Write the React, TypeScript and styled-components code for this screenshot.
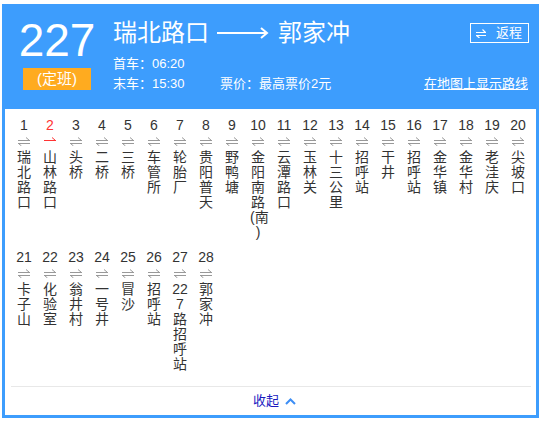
import React from "react";
import styled, { createGlobalStyle } from "styled-components";

const Global = createGlobalStyle`
  html, body { margin: 0; padding: 0; background: #fff; }
  body { font-family: "Liberation Sans", "Noto Sans CJK SC", sans-serif; }
`;

const BLUE = "#3d9dfd";

const Panel = styled.div`
  box-sizing: border-box;
  width: 537px;
  margin: 4px 0 0 2px;
  border: 3px solid ${BLUE};
  background: #fff;
`;

const Header = styled.div`
  display: flex;
  height: 102px;
  box-sizing: border-box;
  padding: 10px 7px 0 16px;
  background: ${BLUE};
  color: #fff;
`;

const LineBadge = styled.div`
  display: flex;
  flex-direction: column;
  align-items: center;
  width: 72px;
`;

const LineNo = styled.div`
  font-family: "Liberation Sans", sans-serif;
  font-size: 46px;
  line-height: 46px;
  height: 46px;
`;

const Tag = styled.div`
  margin-top: 5px;
  width: 68px;
  height: 22px;
  background: #ffab1f;
  font-size: 15px;
  line-height: 22px;
  text-align: center;
`;

const Info = styled.div`
  flex: 1;
  margin-left: 20px;
  padding-top: 1px;
`;

const TitleRow = styled.div`
  display: flex;
  align-items: center;
  height: 30px;
`;

const Terminal = styled.span`
  font-size: 24px;
  line-height: 30px;
`;

const LongArrow = styled.svg`
  display: block;
  margin: 0 9px 0 8px;
`;

const ReturnButton = styled.div`
  margin-left: auto;
  display: flex;
  align-items: center;
  gap: 10px;
  height: 20px;
  box-sizing: border-box;
  padding: 0 6px 0 5px;
  border: 1px solid #fff;
  font-size: 13px;
  line-height: 18px;
`;

const Times = styled.div`
  margin-top: 6px;
  font-size: 13px;
  line-height: 20px;
`;

const InfoLine = styled.div`
  display: flex;
  height: 20px;
  align-items: center;
`;

const TimeText = styled.span`
  width: 107px;
`;

const MapLink = styled.a`
  margin-left: auto;
  margin-right: 1px;
  color: #fff;
  text-decoration: underline;
  cursor: pointer;
`;

const Stops = styled.div`
  display: grid;
  grid-template-columns: repeat(20, 26px);
  row-gap: 8px;
  align-items: start;
  padding: 7px 5px 0 6px;
`;

const Stop = styled.div`
  display: flex;
  flex-direction: column;
  align-items: center;
`;

const StopNo = styled.div<{ $active?: boolean }>`
  font-family: "Liberation Sans", sans-serif;
  font-size: 14px;
  line-height: 18px;
  height: 18px;
  color: ${(p) => (p.$active ? "#ff3333" : "#333")};
`;

const DirIcon = styled.svg`
  display: block;
  margin: 3px 0 4px;
`;

const StopName = styled.div`
  width: 16px;
  font-size: 14px;
  line-height: 15px;
  color: #333;
  text-align: center;
  word-break: break-all;
`;

const Divider = styled.div`
  margin: 14px 5px 0 6px;
  border-top: 1px solid #e8e8e8;
`;

const Footer = styled.div`
  display: flex;
  align-items: center;
  justify-content: center;
  gap: 6px;
  height: 28px;
`;

const Collapse = styled.a`
  font-size: 13px;
  line-height: 16px;
  color: #1a1ac0;
  cursor: pointer;
  margin-left: 8px;
`;

const stops = [
  "瑞北路口", "山林路口", "头桥", "二桥", "三桥", "车管所", "轮胎厂", "贵阳普天",
  "野鸭塘", "金阳南路(南\u200B)", "云潭路口", "玉林关", "十三公里", "招呼站", "干井",
  "招呼站", "金华镇", "金华村", "老洼庆", "尖坡口", "卡子山", "化验室", "翁井村",
  "一号井", "冒沙", "招呼站", "227路招呼站", "郭家冲",
];

const Harpoons: React.FC<{ color: string; single?: boolean }> = ({ color, single }) => (
  <DirIcon width="12" height="9" viewBox="0 0 12 9">
    <path d="M0 3.5H12M11.5 3.5L8 0.5" stroke={color} strokeWidth="1" fill="none" />
    {!single && <path d="M0 6.5H12M0.5 6.5L3.5 9" stroke={color} strokeWidth="1" fill="none" />}
  </DirIcon>
);

export default function App() {
  return (
    <>
      <Global />
      <Panel>
        <Header>
          <LineBadge>
            <LineNo>227</LineNo>
            <Tag>(定班)</Tag>
          </LineBadge>
          <Info>
            <TitleRow>
              <Terminal>瑞北路口</Terminal>
              <LongArrow width="52" height="12" viewBox="0 0 52 12">
                <path d="M0 6H50" stroke="#fff" strokeWidth="2" />
                <path d="M44 1L50 6L44 11" stroke="#fff" strokeWidth="2" fill="none" />
              </LongArrow>
              <Terminal>郭家冲</Terminal>
              <ReturnButton>
                <svg width="10" height="9" viewBox="0 0 10 9">
                  <path d="M0 3.5H10M9.5 3.5L6.5 0.5" stroke="#fff" strokeWidth="1.2" fill="none" />
                  <path d="M0 6.5H10M0.5 6.5L3.5 9" stroke="#fff" strokeWidth="1.2" fill="none" />
                </svg>
                <span>返程</span>
              </ReturnButton>
            </TitleRow>
            <Times>
              <InfoLine>
                <TimeText>首车：06:20</TimeText>
              </InfoLine>
              <InfoLine>
                <TimeText>末车：15:30</TimeText>
                <span>票价：最高票价2元</span>
                <MapLink>在地图上显示路线</MapLink>
              </InfoLine>
            </Times>
          </Info>
        </Header>
        <Stops>
          {stops.map((name, i) => (
            <Stop key={i}>
              <StopNo $active={i === 1}>{i + 1}</StopNo>
              {i === 1 ? <Harpoons color="#ff3333" single /> : <Harpoons color="#999" />}
              <StopName>{name}</StopName>
            </Stop>
          ))}
        </Stops>
        <Divider />
        <Footer>
          <Collapse>收起</Collapse>
          <svg width="11" height="7" viewBox="0 0 11 7">
            <path d="M1 6L5.5 1.5L10 6" stroke="#3d8ef5" strokeWidth="2" fill="none" />
          </svg>
        </Footer>
      </Panel>
    </>
  );
}
